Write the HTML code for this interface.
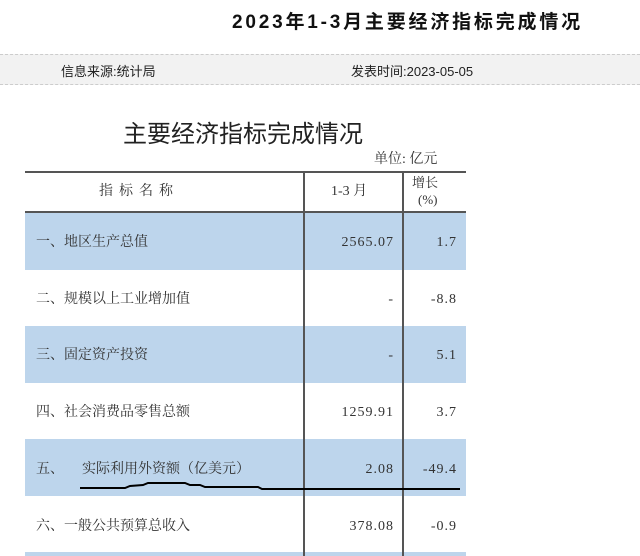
<!DOCTYPE html>
<html><head><meta charset="utf-8"><style>
html,body{margin:0;width:640px;height:556px;overflow:hidden}
body{background:#fff;position:relative;font-family:"Liberation Sans","Noto Sans CJK SC",sans-serif}
.a{position:absolute;white-space:nowrap}
.s{font-family:"Liberation Serif","Noto Serif CJK SC",serif;color:#333;font-size:14px;line-height:20px}
.n{text-align:right;letter-spacing:1px}
.c1{right:246px}
.c2{right:183px}
.row{position:absolute;left:25px;width:441px;height:57px}
.b{background:#bdd5ec}
.v{position:absolute;top:172px;width:2px;height:384px;background:#555}
</style></head><body>
<div class="a" style="left:232px;top:7px;font-size:19px;font-weight:bold;letter-spacing:2.8px;color:#111">2023年1-3月主要经济指标完成情况</div>
<div class="a" style="left:0;top:54px;width:640px;height:29px;background:#f2f2f2;border-top:1px dashed #ccc;border-bottom:1px dashed #ccc"></div>
<div class="a" style="left:61px;top:61px;font-size:13px;color:#222">信息来源:统计局</div>
<div class="a" style="left:351px;top:61px;font-size:13px;color:#222">发表时间:2023-05-05</div>
<div class="a" style="left:123px;top:116px;font-size:24px;color:#222;font-family:'Noto Sans CJK SC',sans-serif;line-height:32px">主要经济指标完成情况</div>
<div class="a s" style="left:374px;top:150px">单位: 亿元</div>
<div class="a" style="left:25px;top:171px;width:441px;height:2px;background:#555"></div>
<div class="a s" style="left:99px;top:182px;letter-spacing:6px">指标名称</div>
<div class="a s" style="left:331px;top:182px">1-3 月</div>
<div class="a s" style="left:412px;top:175px;font-size:13px;line-height:16px">增长</div>
<div class="a s" style="left:418px;top:192px;font-size:13px;line-height:16px">(%)</div>
<div class="a" style="left:25px;top:211px;width:441px;height:2px;background:#555"></div>
<div class="row b" style="top:213px"></div>
<div class="row b" style="top:326px"></div>
<div class="row b" style="top:439px"></div>
<div class="row b" style="top:552px;height:4px"></div>
<div class="v" style="left:303px"></div>
<div class="v" style="left:402px"></div>
<div class="a s" style="left:36px;top:233px">一、地区生产总值</div><div class="a s n c1" style="top:233px">2565.07</div><div class="a s n c2" style="top:233px">1.7</div>
<div class="a s" style="left:36px;top:290px">二、规模以上工业增加值</div><div class="a s n c1" style="top:290px">-</div><div class="a s n c2" style="top:290px">-8.8</div>
<div class="a s" style="left:36px;top:346px">三、固定资产投资</div><div class="a s n c1" style="top:346px">-</div><div class="a s n c2" style="top:346px">5.1</div>
<div class="a s" style="left:36px;top:403px">四、社会消费品零售总额</div><div class="a s n c1" style="top:403px">1259.91</div><div class="a s n c2" style="top:403px">3.7</div>
<div class="a s" style="left:36px;top:460px">五、</div><div class="a s" style="left:82px;top:460px">实际利用外资额（亿美元）</div><div class="a s n c1" style="top:460px">2.08</div><div class="a s n c2" style="top:460px">-49.4</div>
<svg class="a" style="left:0;top:0" width="640" height="556"><path d="M80 488 L125 488 L130 486 L143 485 L148 483 L185 483 L190 485 L200 485 L205 487 L258 487 L262 489 L460 489" fill="none" stroke="#000" stroke-width="2"/></svg>
<div class="a s" style="left:36px;top:517px">六、一般公共预算总收入</div><div class="a s n c1" style="top:517px">378.08</div><div class="a s n c2" style="top:517px">-0.9</div>
</body></html>
